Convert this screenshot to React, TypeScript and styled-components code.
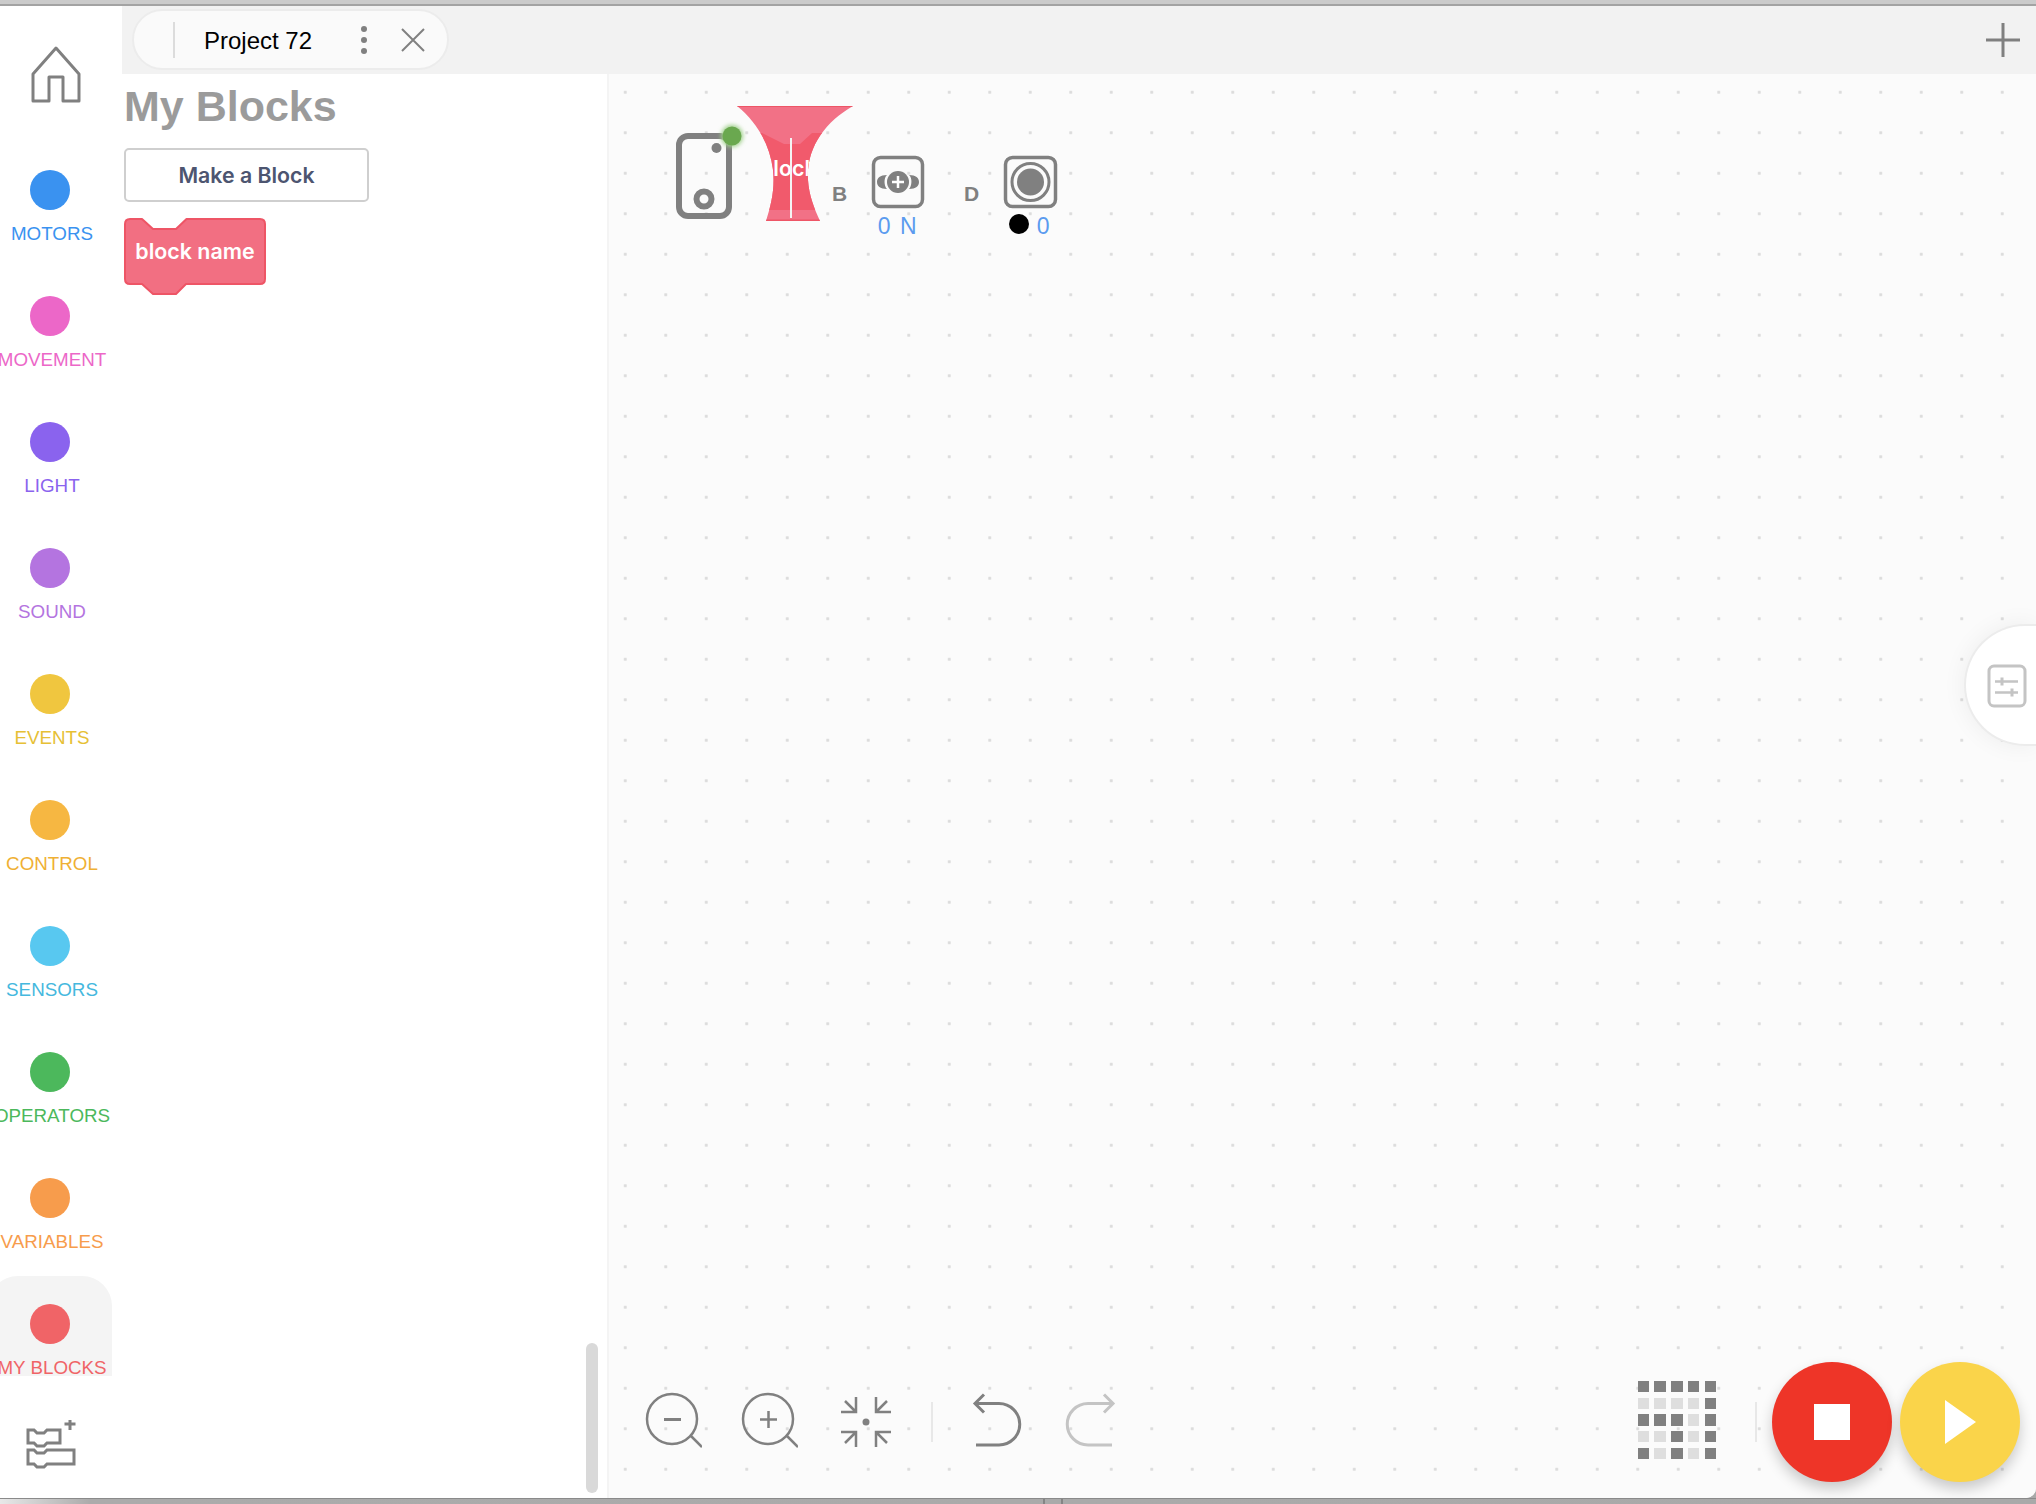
import * as React from 'react'
import styled, { createGlobalStyle } from 'styled-components'

const GlobalStyle = createGlobalStyle`
html, body {
  margin: 0;
  padding: 0;
  background: #a9a9a9;
  font-family: "Liberation Sans", Arial, sans-serif;
}
`

const Page = styled.div`
width: 2036px;
height: 1504px;
display: flex;
flex-direction: column;
overflow: hidden;
background: #a9a9a9;
`

const TopStrip = styled.div`
height: 6px;
flex: none;
box-sizing: border-box;
background: #cbcbcb;
border-bottom: 2px solid #a3a3a3;
`

const BottomStrip = styled.div`
height: 6px;
flex: none;
box-sizing: border-box;
border-top: 1px solid #8a8a8a;
background: linear-gradient(90deg, #e8e8e8 0, #ababab 90px, #a9a9a9 100%);
display: flex;
`

const StripTick = styled.div`
width: 2px;
height: 5px;
background: #858585;
margin-left: ${p => p.$left}px;
`

const Win = styled.div`
flex: 1;
min-height: 0;
display: flex;
background: #fff;
border-radius: 0 0 10px 0;
overflow: hidden;
`

const Rail = styled.nav`
width: 122px;
flex: none;
display: flex;
flex-direction: column;
background: #fff;
`

const HomeLink = styled.div`
height: 136px;
flex: none;
padding: 40px 0 0 31px;
box-sizing: border-box;
`

const Category = styled.div`
width: 124px;
height: 100px;
flex: none;
margin: 0 0 26px -12px;
padding-top: 28px;
box-sizing: border-box;
border-radius: 30px 30px 0 0;
background: ${p => (p.$active ? '#f4f4f4' : 'transparent')};
`

const CategoryDot = styled.div`
width: 40px;
height: 40px;
margin-left: 42px;
border-radius: 50%;
background: ${p => p.$color};
`

const CategoryLabel = styled.div`
width: 128px;
margin-top: 14px;
display: flex;
justify-content: center;
white-space: nowrap;
font-size: 18.8px;
line-height: 20px;
color: ${p => p.$color};
`

const AddExtension = styled.div`
margin: 18px 0 0 26px;
`

const Main = styled.div`
flex: 1;
min-width: 0;
display: flex;
flex-direction: column;
`

const Header = styled.header`
height: 68px;
flex: none;
display: flex;
align-items: flex-start;
justify-content: space-between;
background: #f2f2f2;
padding: 3px 15px 0 10px;
box-sizing: border-box;
`

const ProjectTab = styled.div`
width: 317px;
height: 61px;
box-sizing: border-box;
display: flex;
align-items: center;
background: #fafafa;
border: 2px solid #ececec;
border-radius: 31px;
padding-left: 39px;
`

const TabDivider = styled.div`
width: 2px;
height: 36px;
background: #dcdcdc;
`

const TabTitle = styled.div`
width: 170px;
padding: 3px 0 0 29px;
box-sizing: border-box;
font-size: 24px;
color: #000;
`

const TabDots = styled.div`
width: 37px;
margin-right: 19px;
display: flex;
flex-direction: column;
align-items: center;
gap: 5px;
`

const TabDot = styled.div`
width: 6px;
height: 6px;
border-radius: 50%;
background: #808080;
`

const Body = styled.div`
flex: 1;
min-height: 0;
display: flex;
`

const Panel = styled.aside`
width: 487px;
flex: none;
position: relative;
box-sizing: border-box;
padding: 8px 0 0 2px;
background: #fff;
border-right: 2px solid #f4f4f4;
`

const PanelTitle = styled.h1`
margin: 0 0 18px 0;
font-size: 43px;
line-height: 48px;
font-weight: 700;
color: #9b9b9b;
`

const MakeBlockButton = styled.button`
display: block;
width: 245px;
height: 54px;
padding: 0;
background: #fff;
border: 2px solid #cfcfcf;
border-radius: 5px;
font-family: Inter, sans-serif;
font-size: 21.3px;
font-weight: 600;
color: #4d5570;
`

const BlockShape = styled.svg`
display: block;
margin-top: 16px;
`

const PanelScrollbar = styled.div`
position: absolute;
right: 9px;
bottom: 5px;
width: 12px;
height: 150px;
border-radius: 6px;
background: #d9d9d9;
`

const Canvas = styled.main`
flex: 1;
min-width: 0;
position: relative;
display: flex;
flex-direction: column;
justify-content: space-between;
background-color: #fbfbfb;
background-image: radial-gradient(circle, #dcdcdc 0, #dcdcdc 1.3px, transparent 1.8px);
background-size: 40.5px 40.5px;
background-position: -4px -2px;
`

const DeviceRow = styled.div`
display: flex;
align-items: flex-start;
padding: 26px 0 0 61px;
`

const Port = styled.div`
display: flex;
align-items: flex-start;
margin: 54px 0 0 ${p => p.$offset}px;
`

const PortLetter = styled.div`
width: 38px;
margin-top: 28px;
font-size: 21px;
line-height: 24px;
font-weight: 700;
color: #808080;
`

const PortColumn = styled.div`
width: 56px;
display: flex;
flex-direction: column;
align-items: center;
`

const PortValue = styled.div`
margin-top: 4px;
height: 24px;
display: flex;
align-items: center;
gap: 8px;
white-space: nowrap;
font-size: 23px;
letter-spacing: 1.6px;
color: #5b9bef;
`

const ColorDot = styled.div`
width: 20px;
height: 20px;
margin-top: -4px;
border-radius: 50%;
background: #000;
`

const SettingsPill = styled.div`
position: absolute;
top: 550px;
right: 0;
width: 72px;
height: 122px;
box-sizing: border-box;
padding: 38px 0 0 21px;
background: #fff;
border: 2px solid #ececec;
border-right: none;
border-radius: 61px 0 0 61px;
box-shadow: 0 0 24px rgba(0, 0, 0, 0.06);
`

const Toolbar = styled.div`
display: flex;
align-items: center;
padding: 0 16px 16px 33px;
`

const ToolGroup = styled.div`
display: flex;
align-items: center;
gap: 36px;
`

const ToolDivider = styled.div`
width: 2px;
height: 40px;
background: #e8e8e8;
margin-left: ${p => p.$left || 0}px;
`

const Matrix = styled.div`
margin: -4px 0 0 auto;
display: grid;
grid-template-columns: repeat(5, 11.5px);
grid-auto-rows: 11.5px;
gap: 5.2px;
`

const MatrixCell = styled.div`
background: ${p => (p.$on ? '#808080' : '#dedede')};
`

const RoundButton = styled.button`
width: 120px;
height: 120px;
flex: none;
padding: 0;
border: none;
border-radius: 50%;
display: flex;
align-items: center;
justify-content: center;
margin-left: ${p => p.$left}px;
background: ${p => p.$color};
box-shadow: 0 7px 14px rgba(0, 0, 0, 0.2);
`

const StopSquare = styled.div`
width: 36px;
height: 36px;
background: #fff;
`

const categories = [
  { name: 'MOTORS', dot: '#3a92f0', text: '#3a92f0' },
  { name: 'MOVEMENT', dot: '#ec67c8', text: '#ec67c8' },
  { name: 'LIGHT', dot: '#8a63ee', text: '#8a63ee' },
  { name: 'SOUND', dot: '#b474e0', text: '#b474e0' },
  { name: 'EVENTS', dot: '#f0c63f', text: '#e6c035' },
  { name: 'CONTROL', dot: '#f6b742', text: '#efb034' },
  { name: 'SENSORS', dot: '#58c8f0', text: '#45b8de' },
  { name: 'OPERATORS', dot: '#4cb85c', text: '#4cb85c' },
  { name: 'VARIABLES', dot: '#f79c4c', text: '#f79c4c' },
  { name: 'MY BLOCKS', dot: '#f06467', text: '#f06467', active: true },
]

const matrix = [
  1, 1, 1, 1, 1,
  0, 0, 0, 0, 1,
  1, 1, 1, 0, 1,
  0, 0, 1, 0, 1,
  1, 0, 1, 0, 1,
]

const HomeIcon = () => (
  <svg width="50" height="58" viewBox="31 46 50 58" fill="none" stroke="#808080" strokeWidth="3" strokeLinejoin="round">
    <path d="M56 48 L79 74 V101 H63 V77 H49 V101 H33 V74 Z" />
  </svg>
)

const AddBlocksIcon = () => (
  <svg width="52" height="50" viewBox="26 1420 52 50" fill="none" stroke="#808080" strokeWidth="3">
    <path d="M28 1430 H34 L37 1433 H44 L47 1430 H60 V1443 H47 L44 1446 H37 L34 1443 H28 Z" />
    <path d="M28 1450 H34 L37 1453 H44 L47 1450 H74 V1464 H47 L44 1467 H37 L34 1464 H28 Z" />
    <path d="M70 1419 V1430 M64.5 1424 H75.5" />
  </svg>
)

const CloseIcon = () => (
  <svg width="24" height="24" viewBox="0 0 24 24" fill="none" stroke="#808080" strokeWidth="2">
    <path d="M1 1 L23 23 M23 1 L1 23" />
  </svg>
)

const PlusIcon = () => (
  <svg width="36" height="36" viewBox="0 0 36 36" fill="none" stroke="#808080" strokeWidth="3" style={{ marginTop: 13 }}>
    <path d="M18 1 V35 M1 18 H35" />
  </svg>
)

const BlockIcon = () => (
  <BlockShape width="144" height="78" viewBox="0 0 144 78">
    <path
      d="M6 1 H18 L29 11 H52 L62.5 1 H136 Q141 1 141 6 V61 Q141 66 136 66 H62 L52 76 H29 L18 66 H6 Q1 66 1 61 V6 Q1 1 6 1 Z"
      fill="#f26f82"
      stroke="#ee5566"
      strokeWidth="2"
      strokeLinejoin="round"
    />
    <text x="71" y="41" textAnchor="middle" fill="#fff" fontFamily="Inter, sans-serif" fontSize="21.4" fontWeight="600">
      block name
    </text>
  </BlockShape>
)

const HubAndBlock = () => (
  <svg width="185" height="125" viewBox="670 100 185 125" style={{ flex: 'none' }}>
    <defs>
      <clipPath id="hourglass">
        <path d="M737 106 H853 C825 122 806 148 808 180 C809 195 814 208 820 221 H766 C771 205 775 190 773 170 C770 145 757 122 737 106 Z" />
      </clipPath>
      <filter id="glow" x="-60%" y="-60%" width="220%" height="220%">
        <feGaussianBlur stdDeviation="2" />
      </filter>
    </defs>
    <rect x="679" y="136" width="50" height="80" rx="9" fill="none" stroke="#808080" strokeWidth="6" />
    <circle cx="716.5" cy="148" r="5" fill="#808080" />
    <circle cx="704" cy="199" r="7.5" fill="none" stroke="#808080" strokeWidth="6" />
    <circle cx="732" cy="136" r="11" fill="#9fd08a" filter="url(#glow)" />
    <circle cx="732" cy="136" r="9.5" fill="#6aa84f" />
    <g clipPath="url(#hourglass)">
      <rect x="730" y="104" width="130" height="120" fill="#f27186" />
      <path d="M730 133 H762 L784 144 H800 L812 133 H860 V210 H730 Z" fill="#f15a6c" />
      <rect x="730" y="105" width="130" height="2" fill="#ee5566" />
      <rect x="730" y="219.5" width="130" height="2" fill="#ee5566" />
      <text x="760" y="176" fill="#fff" fontFamily="Inter, sans-serif" fontSize="21.4" fontWeight="600">
        block
      </text>
      <rect x="790" y="138" width="2" height="80" fill="#f4f4f4" />
    </g>
  </svg>
)

const MotorIcon = () => (
  <svg width="56" height="56" viewBox="870 154 56 56" fill="none">
    <rect x="873.5" y="157.5" width="49" height="49" rx="7" stroke="#808080" strokeWidth="3.5" />
    <path d="M887 175 C880 175 877 178 877 182 C877 186 880 189 887 189 C884 186 883.5 178 887 175 Z" fill="#808080" />
    <path d="M909 175 C916 175 919 178 919 182 C919 186 916 189 909 189 C912 186 912.5 178 909 175 Z" fill="#808080" />
    <circle cx="898" cy="182" r="11" fill="#808080" />
    <path d="M898 176 V188 M892 182 H904" stroke="#fff" strokeWidth="2.5" />
  </svg>
)

const SensorIcon = () => (
  <svg width="56" height="56" viewBox="1002 154 56 56" fill="none">
    <rect x="1005.5" y="157.5" width="50" height="49" rx="7" stroke="#808080" strokeWidth="3.5" />
    <circle cx="1030.5" cy="182" r="18.5" stroke="#808080" strokeWidth="3" />
    <circle cx="1030.5" cy="182" r="13.5" fill="#808080" />
  </svg>
)

const SettingsIcon = () => (
  <svg width="40" height="44" viewBox="1987 663 40 44" fill="none" stroke="#c4c4c4">
    <rect x="1989" y="665" width="36" height="40" rx="5" strokeWidth="3" />
    <path d="M1995 680.5 H2018 M1995 691.5 H2018" strokeWidth="2.5" />
    <path d="M2002 676.5 V684.5 M2012 687.5 V695.5" strokeWidth="3" />
  </svg>
)

const ZoomOutIcon = () => (
  <svg width="60" height="60" viewBox="642 1392 60 60" fill="none" stroke="#808080" strokeWidth="2.5">
    <circle cx="672" cy="1419" r="25" />
    <path d="M691 1436 L702 1447" />
    <path d="M664 1419.5 H681" strokeWidth="3" />
  </svg>
)

const ZoomInIcon = () => (
  <svg width="60" height="60" viewBox="738 1392 60 60" fill="none" stroke="#808080" strokeWidth="2.5">
    <circle cx="768" cy="1419" r="25" />
    <path d="M787 1436 L798 1447" />
    <path d="M760 1419.5 H777 M768.5 1411 V1428" strokeWidth="2.5" />
  </svg>
)

const FitIcon = () => (
  <svg width="61" height="60" viewBox="834 1392 61 60" fill="none" stroke="#808080" strokeWidth="2.5">
    <circle cx="866" cy="1422" r="3.5" fill="#808080" stroke="none" />
    <path d="M841 1412 H856 V1397 M845 1401 L855 1411" />
    <path d="M891 1412 H876 V1397 M887 1401 L877 1411" />
    <path d="M841 1432 H856 V1447 M845 1443 L855 1433" />
    <path d="M891 1432 H876 V1447 M887 1443 L877 1433" />
  </svg>
)

const UndoIcon = () => (
  <svg width="58" height="60" viewBox="969 1392 58 60" fill="none" stroke="#808080" strokeWidth="3">
    <path d="M984 1394.5 L975 1403.5 L984 1412.5 M975 1403.5 H999 A20.5 20.5 0 0 1 999 1445 H976" />
  </svg>
)

const RedoIcon = () => (
  <svg width="58" height="60" viewBox="1063 1392 58 60" fill="none" stroke="#c4c4c4" strokeWidth="3">
    <path d="M1104 1394.5 L1113 1403.5 L1104 1412.5 M1113 1403.5 H1088 A20.5 20.5 0 0 0 1088 1445 H1112" />
  </svg>
)

const PlayIcon = () => (
  <svg width="32" height="44" viewBox="0 0 32 44" fill="#fff" style={{ marginLeft: 2 }}>
    <path d="M0 0 L31 22 L0 44 Z" />
  </svg>
)

export default function App() {
  return (
    <Page>
      <GlobalStyle />
      <TopStrip />
      <Win>
        <Rail>
          <HomeLink>
            <HomeIcon />
          </HomeLink>
          {categories.map(c => (
            <Category key={c.name} $active={c.active}>
              <CategoryDot $color={c.dot} />
              <CategoryLabel $color={c.text}>{c.name}</CategoryLabel>
            </Category>
          ))}
          <AddExtension>
            <AddBlocksIcon />
          </AddExtension>
        </Rail>
        <Main>
          <Header>
            <ProjectTab>
              <TabDivider />
              <TabTitle>Project 72</TabTitle>
              <TabDots>
                <TabDot />
                <TabDot />
                <TabDot />
              </TabDots>
              <CloseIcon />
            </ProjectTab>
            <PlusIcon />
          </Header>
          <Body>
            <Panel>
              <PanelTitle>My Blocks</PanelTitle>
              <MakeBlockButton>Make a Block</MakeBlockButton>
              <BlockIcon />
              <PanelScrollbar />
            </Panel>
            <Canvas>
              <DeviceRow>
                <HubAndBlock />
                <Port $offset={-23}>
                  <PortLetter>B</PortLetter>
                  <PortColumn>
                    <MotorIcon />
                    <PortValue>0 N</PortValue>
                  </PortColumn>
                </Port>
                <Port $offset={38}>
                  <PortLetter>D</PortLetter>
                  <PortColumn>
                    <SensorIcon />
                    <PortValue>
                      <ColorDot />0
                    </PortValue>
                  </PortColumn>
                </Port>
              </DeviceRow>
              <SettingsPill>
                <SettingsIcon />
              </SettingsPill>
              <Toolbar>
                <ToolGroup>
                  <ZoomOutIcon />
                  <ZoomInIcon />
                  <FitIcon />
                  <ToolDivider />
                  <UndoIcon />
                  <RedoIcon />
                </ToolGroup>
                <Matrix>
                  {matrix.map((on, i) => (
                    <MatrixCell key={i} $on={on === 1} />
                  ))}
                </Matrix>
                <ToolDivider $left={39} />
                <RoundButton $color="#ee3528" $left={15}>
                  <StopSquare />
                </RoundButton>
                <RoundButton $color="#fad44a" $left={8}>
                  <PlayIcon />
                </RoundButton>
              </Toolbar>
            </Canvas>
          </Body>
        </Main>
      </Win>
      <BottomStrip>
        <StripTick $left={1043} />
        <StripTick $left={16} />
      </BottomStrip>
    </Page>
  )
}
